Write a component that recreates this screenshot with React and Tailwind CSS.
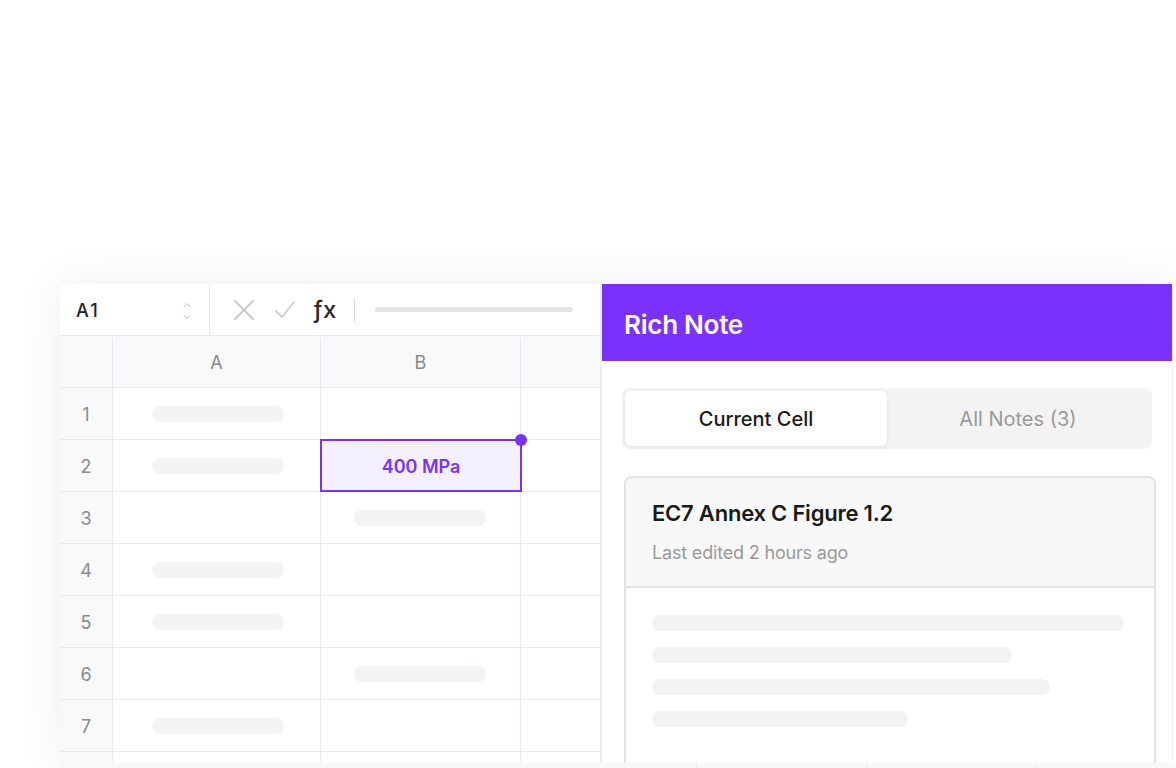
import React from "react";
import { ChevronUp, ChevronDown } from "lucide-react";

const rows = [
  { n: 1, a: true, b: false },
  { n: 2, a: true, b: "sel" },
  { n: 3, a: false, b: true },
  { n: 4, a: true, b: false },
  { n: 5, a: true, b: false },
  { n: 6, a: false, b: true },
  { n: 7, a: true, b: false },
  { n: null, a: false, b: false },
];

const Skeleton = ({ className = "" }) => (
  <div className={`h-4 rounded-full bg-[#f2f3f5] ${className}`} />
);

const FormulaBar = () => (
  <div className="flex h-[52px] shrink-0 items-center border-b border-[#e7e9ef] bg-white">
    {/* Name box */}
    <div className="flex h-full w-[150px] items-center justify-between border-r border-[#e7e9ef] pl-4 pr-[16px] pt-[2px]">
      <span className="text-[18px] font-medium tracking-[0.12em] text-[#222]">A1</span>
      <div className="flex flex-col items-center text-[#bdbdbd]">
        <ChevronUp size={12} strokeWidth={2} />
        <ChevronDown size={12} strokeWidth={2} />
      </div>
    </div>

    {/* Actions */}
    <div className="flex items-center pl-[23px]">
      <svg width="22" height="22" viewBox="0 0 22 22" className="text-[#c9c9c9]">
        <path d="M2 2 L20 20 M20 2 L2 20" stroke="currentColor" strokeWidth="2" strokeLinecap="round" />
      </svg>
      <svg width="22" height="22" viewBox="0 0 22 22" className="ml-[19px] text-[#cfcfcf]">
        <path d="M2 12 L8 18 L20 3" stroke="currentColor" strokeWidth="2" fill="none" strokeLinecap="round" strokeLinejoin="round" />
      </svg>
      <span className="ml-[17px] text-[24px] font-medium leading-none text-[#2a2a2a]">ƒx</span>
      <div className="ml-[18px] h-6 w-px bg-[#dcdcdc]" />
      <div className="ml-[20px] h-[5px] w-[198px] rounded-full bg-[#e3e3e3]" />
    </div>
  </div>
);

const Sheet = () => (
  <div className="flex w-[540px] shrink-0 flex-col overflow-hidden bg-white">
    <FormulaBar />

    {/* Column headers */}
    <div className="flex h-[52px] shrink-0 border-b border-[#e7e9ef] bg-[#f8f9fb] pt-[2px] text-[18px] text-[#8a8a8a]">
      <div className="w-[53px] border-r border-[#e7e9ef]" />
      <div className="flex w-[208px] items-center justify-center border-r border-[#e7e9ef]">A</div>
      <div className="flex w-[200px] items-center justify-center border-r border-[#e7e9ef]">B</div>
      <div className="flex-1" />
    </div>

    {/* Rows */}
    {rows.map((row, i) => (
      <div key={i} className="flex h-[52px] shrink-0 border-b border-[#e7e9ef]">
        <div className="flex w-[53px] items-center justify-center border-r border-[#e7e9ef] bg-[#f8f9fb] pt-[2px] text-[18px] text-[#8a8a8a]">
          {row.n}
        </div>
        <div className="flex w-[208px] items-center border-r border-[#e7e9ef] pl-[39px]">
          {row.a && <Skeleton className="w-[132px]" />}
        </div>
        <div className="relative flex w-[200px] items-center border-r border-[#e7e9ef] pl-[33px]">
          {row.b === true && <Skeleton className="w-[132px]" />}
          {row.b === "sel" && (
            <div className="absolute -left-px -top-px z-10 flex h-[53px] w-[202px] items-center justify-center border-2 border-[#7b31fe] bg-[#f5f0ff] pt-[2px]">
              <span className="text-[18px] font-semibold text-[#7b31fe]">400 MPa</span>
              <div className="absolute -right-[7px] -top-[7px] h-[12px] w-[12px] rounded-full bg-[#7b31fe]" />
            </div>
          )}
        </div>
        <div className="flex-1" />
      </div>
    ))}
  </div>
);

const NotePanel = () => (
  <div className="flex w-[573px] shrink-0 flex-col overflow-hidden border-l-2 border-r border-[#eceef2] bg-white">
    <div className="flex h-[77px] shrink-0 items-center bg-[#7b31fe] px-[22px] pt-[3px]">
      <h1 className="text-[26px] font-semibold tracking-[-0.01em] text-white">Rich Note</h1>
    </div>

    {/* Tabs */}
    <div className="mx-5 mt-[27px] grid h-[61px] shrink-0 grid-cols-2 rounded-lg bg-[#f3f3f3] p-[3px]">
      <div className="flex items-center justify-center rounded-md bg-white text-[20px] font-medium text-[#1a1a1a] shadow-[0_1px_4px_rgba(0,0,0,0.08)]">
        Current Cell
      </div>
      <div className="flex items-center justify-center text-[20px] text-[#9a9a9a]">All Notes (3)</div>
    </div>

    {/* Note card */}
    <div className="ml-[22px] mr-[16px] mt-[27px] shrink-0 rounded-lg border-2 border-[#e2e2e2] bg-white">
      <div className="rounded-t-lg border-b-2 border-[#e2e2e2] bg-[#f8f8f8] px-[26px] pb-[20px] pt-[19px]">
        <h2 className="text-[22px] font-semibold tracking-[-0.01em] text-[#1a1a1a]">EC7 Annex C Figure 1.2</h2>
        <p className="mt-[9px] text-[18px] tracking-[-0.01em] text-[#9a9a9a]">Last edited 2 hours ago</p>
      </div>
      <div className="flex flex-col gap-4 px-[26px] pb-10 pt-[27px]">
        <Skeleton className="w-[472px]" />
        <Skeleton className="w-[360px]" />
        <Skeleton className="w-[398px]" />
        <Skeleton className="w-[256px]" />
      </div>
    </div>
  </div>
);

const App = () => {
  return (
    <div className="h-[768px] w-[1176px] overflow-hidden bg-white font-['Inter',sans-serif]">
      <div className="pl-[60px] pt-[284px]">
        <div className="flex h-[479px] overflow-hidden rounded-tl-md shadow-[0_0_48px_rgba(15,23,42,0.07)]">
          <Sheet />
          <NotePanel />
        </div>
        {/* Layer behind, peeking at the bottom */}
        <div className="flex h-[5px] w-[1110px] bg-[#f7f8fa]">
          <div className="w-[636px]" />
          <div className="w-[170px] border-l border-[#e7e9ef]" />
          <div className="w-[170px] border-l border-[#e7e9ef]" />
          <div className="flex-1 border-l border-[#e7e9ef]" />
        </div>
      </div>
    </div>
  );
};

export default App;
